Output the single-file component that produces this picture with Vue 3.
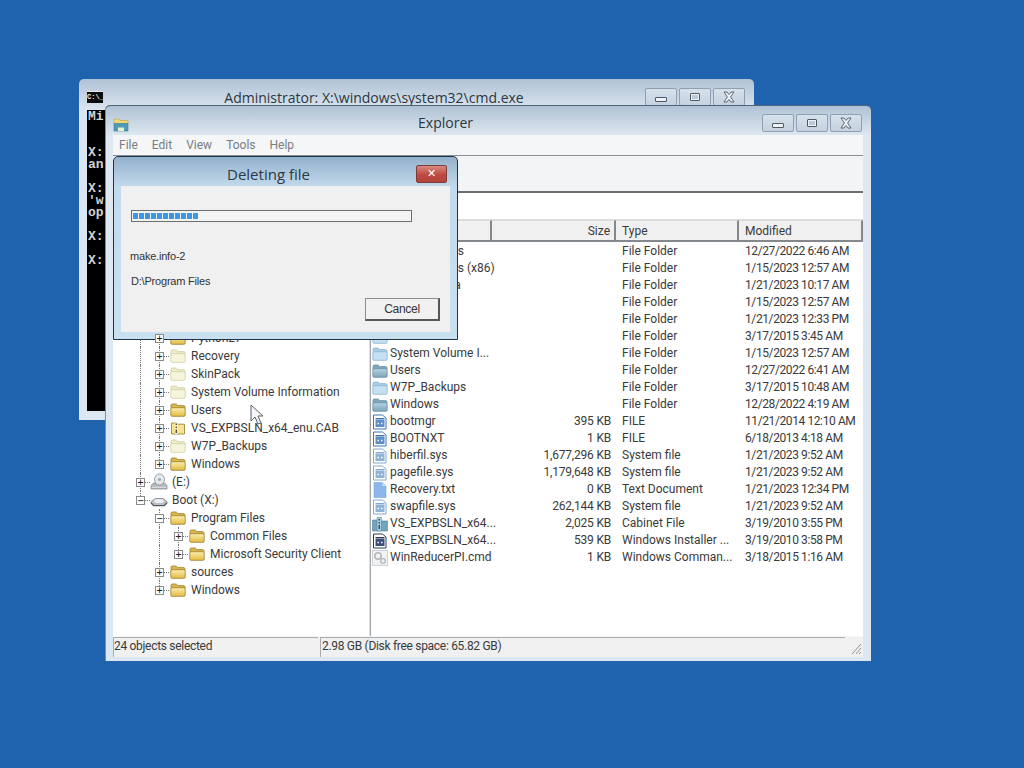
<script setup>
const consoleLines = ["Mi", "", "", "X:", "an", "", "X:", "'w", "op", "", "X:", "", "X:"]
const menus = ["File", "Edit", "View", "Tools", "Help"]

// guides: one entry per indent column. "|" line, "+" tee, "L" end, "" empty
const tree = [
  { name: "Python27", guides: ["|", "+"], box: "+", icon: "folder", tone: "yellow" },
  { name: "Recovery", guides: ["|", "+"], box: "+", icon: "folder", tone: "pale" },
  { name: "SkinPack", guides: ["|", "+"], box: "+", icon: "folder", tone: "pale" },
  { name: "System Volume Information", guides: ["|", "+"], box: "+", icon: "folder", tone: "pale" },
  { name: "Users", guides: ["|", "+"], box: "+", icon: "folder", tone: "yellow" },
  { name: "VS_EXPBSLN_x64_enu.CAB", guides: ["|", "+"], box: "+", icon: "zip", tone: "yellow" },
  { name: "W7P_Backups", guides: ["|", "+"], box: "+", icon: "folder", tone: "pale" },
  { name: "Windows", guides: ["|", "L"], box: "+", icon: "folder", tone: "yellow" },
  { name: "(E:)", guides: ["+"], box: "+", icon: "cd", tone: "wide" },
  { name: "Boot (X:)", guides: ["L"], box: "-", icon: "drive", tone: "wide" },
  { name: "Program Files", guides: ["", "+"], box: "-", icon: "folder", tone: "yellow" },
  { name: "Common Files", guides: ["", "|", "+"], box: "+", icon: "folder", tone: "yellow" },
  { name: "Microsoft Security Client", guides: ["", "|", "L"], box: "+", icon: "folder", tone: "yellow" },
  { name: "sources", guides: ["", "+"], box: "+", icon: "folder", tone: "yellow" },
  { name: "Windows", guides: ["", "L"], box: "+", icon: "folder", tone: "yellow" },
]

const columns = [
  { label: "", cls: "" },
  { label: "Size", cls: "right" },
  { label: "Type", cls: "" },
  { label: "Modified", cls: "" },
]

const files = [
  { name: "Program Files", size: "", type: "File Folder", date: "12/27/2022 6:46 AM", icon: "folder", tone: "steel" },
  { name: "Program Files (x86)", size: "", type: "File Folder", date: "1/15/2023 12:57 AM", icon: "folder", tone: "steel" },
  { name: "ProgramData", size: "", type: "File Folder", date: "1/21/2023 10:17 AM", icon: "folder", tone: "sky" },
  { name: "Python27", size: "", type: "File Folder", date: "1/15/2023 12:57 AM", icon: "folder", tone: "steel" },
  { name: "Recovery", size: "", type: "File Folder", date: "1/21/2023 12:33 PM", icon: "folder", tone: "sky" },
  { name: "SkinPack", size: "", type: "File Folder", date: "3/17/2015 3:45 AM", icon: "folder", tone: "sky" },
  { name: "System Volume I...", size: "", type: "File Folder", date: "1/15/2023 12:57 AM", icon: "folder", tone: "sky" },
  { name: "Users", size: "", type: "File Folder", date: "12/27/2022 6:41 AM", icon: "folder", tone: "steel" },
  { name: "W7P_Backups", size: "", type: "File Folder", date: "3/17/2015 10:48 AM", icon: "folder", tone: "sky" },
  { name: "Windows", size: "", type: "File Folder", date: "12/28/2022 4:19 AM", icon: "folder", tone: "steel" },
  { name: "bootmgr", size: "395 KB", type: "FILE", date: "11/21/2014 12:10 AM", icon: "sysfile", tone: "" },
  { name: "BOOTNXT", size: "1 KB", type: "FILE", date: "6/18/2013 4:18 AM", icon: "sysfile", tone: "" },
  { name: "hiberfil.sys", size: "1,677,296 KB", type: "System file", date: "1/21/2023 9:52 AM", icon: "sysfile", tone: "faded" },
  { name: "pagefile.sys", size: "1,179,648 KB", type: "System file", date: "1/21/2023 9:52 AM", icon: "sysfile", tone: "faded" },
  { name: "Recovery.txt", size: "0 KB", type: "Text Document", date: "1/21/2023 12:34 PM", icon: "doc", tone: "" },
  { name: "swapfile.sys", size: "262,144 KB", type: "System file", date: "1/21/2023 9:52 AM", icon: "sysfile", tone: "faded" },
  { name: "VS_EXPBSLN_x64...", size: "2,025 KB", type: "Cabinet File", date: "3/19/2010 3:55 PM", icon: "cab", tone: "" },
  { name: "VS_EXPBSLN_x64...", size: "539 KB", type: "Windows Installer ...", date: "3/19/2010 3:58 PM", icon: "sysfile", tone: "dark" },
  { name: "WinReducerPI.cmd", size: "1 KB", type: "Windows Comman...", date: "3/18/2015 1:16 AM", icon: "gear", tone: "" },
]

const progressBlocks = 11
</script>

<template>
  <div class="desktop">
    <svg class="defs" width="0" height="0">
      <defs>
        <linearGradient id="gy" x1="0" y1="0" x2="0" y2="1">
          <stop offset="0" stop-color="#fbeeae" />
          <stop offset="1" stop-color="#e2bb45" />
        </linearGradient>
        <linearGradient id="gs" x1="0" y1="0" x2="0" y2="1">
          <stop offset="0" stop-color="#b6d3e0" />
          <stop offset="1" stop-color="#7ca5b9" />
        </linearGradient>
      </defs>
      <symbol id="folder" viewBox="0 0 16 16">
        <path d="M1 6V3.300C1 2.500 1.500 2 2.200 2h3.600c.5 0 .8.200 1.100.6l.7 1h5.900c.9 0 1.500.6 1.500 1.400v1.500H1z" fill="var(--back)" stroke="var(--edge)" stroke-width=".8" />
        <path d="M.8 7c0-.8.5-1.300 1.200-1.300h12c.7 0 1.200.5 1.200 1.300v6c0 .8-.5 1.300-1.200 1.300H2c-.7 0-1.200-.5-1.200-1.300z" fill="var(--front)" stroke="var(--edge)" stroke-width=".8" />
      </symbol>
      <symbol id="zip" viewBox="0 0 16 16">
        <path d="M1.500 3h5l1 1.200h7v9.800h-13z" fill="#f6e394" stroke="#8f7a30" stroke-width=".8" />
        <path d="M5 3h2.500v11H5z" fill="#fff6c8" />
        <path d="M5.600 3.500h1.300v1.400H5.600zM5.600 6.500h1.300v1.400H5.600zM5.600 9.500h1.300v3.500H5.600z" fill="#3c3c30" />
      </symbol>
      <symbol id="cd" viewBox="0 0 18 18">
        <path d="M1 12.500 3.500 10h11l2.500 2.500V16H1z" fill="#b4b9bf" stroke="#70777e" stroke-width=".6" />
        <path d="M1.800 14.300h14.400" stroke="#eef0f2" stroke-width=".8" />
        <ellipse cx="9.500" cy="6.500" rx="5" ry="5.500" fill="#e4e9ec" stroke="#878f95" stroke-width=".8" />
        <circle cx="9.500" cy="6.500" r="1.600" fill="#a0a9b0" />
      </symbol>
      <symbol id="drive" viewBox="0 0 18 18">
        <path d="M.6 11 5.500 7.500h7.500l4.400 3.500-3.400 3.500H3.800z" fill="#bcc1c5" stroke="#6f767d" stroke-width=".7" />
        <ellipse cx="9" cy="10" rx="5" ry="2" fill="#eceeef" />
        <path d="M1 12 3.800 14.600h10.400L17 12" fill="none" stroke="#50575e" stroke-width="1.200" />
      </symbol>
      <symbol id="sysfile" viewBox="0 0 16 16">
        <path d="M1.500 1h9l3.500 3v11H1.500z" fill="#fff" stroke="var(--line, #3e74b2)" />
        <rect x="3.500" y="6" width="9" height="7" fill="var(--panel, #5d8fc6)" />
        <rect x="3.500" y="4" width="9" height="1.500" fill="var(--line, #3e74b2)" />
        <path d="M5.500 9.500h1.500M9 9.500h1.500" stroke="#fff" stroke-width="1.400" />
      </symbol>
      <symbol id="doc" viewBox="0 0 16 16">
        <path d="M2 .5h8.500L14 4v11.500H2z" fill="#8cb7ea" stroke="#7aa6db" stroke-width=".6" />
        <path d="M10.500.5V4H14" fill="#cfe2f7" />
      </symbol>
      <symbol id="cab" viewBox="0 0 16 16">
        <path d="M.5 4h5l1.500 1h8.500v10H.5z" fill="#73a3bd" stroke="#4e7f9a" stroke-width=".6" />
        <path d="M5 1.500h4.500V15H5z" fill="#a8cfe0" stroke="#4e7f9a" stroke-width=".5" />
        <path d="M6.500 3H8v1.500H6.500zM6.500 6H8v1.500H6.500zM6.500 9H8v4H6.500z" fill="#2e5068" />
      </symbol>
      <symbol id="gear" viewBox="0 0 16 16">
        <rect x=".5" y=".5" width="15" height="15" fill="#f2f2f2" stroke="#cfd3d6" />
        <circle cx="6" cy="6" r="3.200" fill="none" stroke="#b3b8bc" stroke-width="1.600" />
        <circle cx="11" cy="11" r="2.300" fill="none" stroke="#b3b8bc" stroke-width="1.300" />
      </symbol>
      <symbol id="capx" viewBox="0 0 14 12">
        <path d="M2 1h3l2 2.500L9 1h3L8.600 6 12 11H9L7 8.500 5 11H2l3.400-5z" fill="#edf2f6" stroke="#4c5a66" stroke-width=".9" />
      </symbol>
    </svg>

    <!-- Console behind -->
    <section class="window cmd">
      <header class="titlebar">
        <span class="cmd-icon">C:\_</span>
        <span class="title">Administrator: X:\windows\system32\cmd.exe</span>
        <div class="caption-buttons">
          <button class="cap"><i class="g-min"></i></button>
          <button class="cap"><i class="g-max"></i></button>
          <button class="cap"><svg width="14" height="12"><use href="#capx" /></svg></button>
        </div>
      </header>
      <div class="console">
        <div v-for="(line, i) in consoleLines" :key="i" class="console-line">{{ line }}</div>
      </div>
    </section>

    <!-- Explorer -->
    <section class="window explorer">
      <header class="titlebar">
        <svg class="app-icon" viewBox="0 0 16 16" width="16" height="16">
          <path d="M1 3h5l1 1.500h8V8H1z" fill="#f0d877" stroke="#b9a24b" stroke-width=".6" />
          <path d="M1 7.500h14V15H1z" fill="#4f9ab5" stroke="#3b7d99" stroke-width=".6" />
          <path d="M5 15v-3.500h6V15" fill="#e6f0d0" />
        </svg>
        <span class="title">Explorer</span>
        <div class="caption-buttons">
          <button class="cap"><i class="g-min"></i></button>
          <button class="cap"><i class="g-max"></i></button>
          <button class="cap"><svg width="14" height="12"><use href="#capx" /></svg></button>
        </div>
      </header>

      <div class="client">
        <nav class="menubar">
          <span v-for="m in menus" :key="m">{{ m }}</span>
        </nav>
        <div class="toolbar"></div>
        <div class="addressbar"></div>

        <div class="panes">
          <div class="tree">
            <div v-for="(node, i) in tree" :key="i" class="tree-row">
              <span v-for="(g, j) in node.guides" :key="j" class="guide" :class="{ line: g === '|', tee: g === '+', end: g === 'L' }">
                <b v-if="j === node.guides.length - 1" class="box">{{ node.box === "+" ? "+" : "−" }}</b>
              </span>
              <svg class="icon" :class="node.tone" width="16" height="16"><use :href="'#' + node.icon" /></svg>
              <span class="tree-label">{{ node.name }}</span>
            </div>
          </div>

          <div class="list">
            <div class="list-header">
              <div v-for="(c, i) in columns" :key="i" class="col-head" :class="c.cls">{{ c.label }}</div>
            </div>
            <div v-for="(f, i) in files" :key="i" class="list-row">
              <div class="cell-name">
                <svg class="icon" :class="f.tone" width="16" height="16"><use :href="'#' + f.icon" /></svg>
                <span>{{ f.name }}</span>
              </div>
              <div class="cell-size">{{ f.size }}</div>
              <div class="cell-type">{{ f.type }}</div>
              <div class="cell-date">{{ f.date }}</div>
            </div>
          </div>
        </div>

        <footer class="statusbar">
          <div class="status-cell first">24 objects selected</div>
          <div class="status-cell second">2.98 GB (Disk free space: 65.82 GB)</div>
          <svg class="grip" width="12" height="14" viewBox="0 0 12 14">
            <path d="M11 3 2 13M11 7 6 13M11 11l-2 2" stroke="#8e9499" fill="none" />
          </svg>
        </footer>
      </div>
    </section>

    <!-- Progress dialog -->
    <section class="dialog">
      <header class="dialog-title">
        <span class="title">Deleting file</span>
        <button class="close-red">✕</button>
      </header>
      <div class="dialog-body">
        <div class="progress">
          <i v-for="n in progressBlocks" :key="n"></i>
        </div>
        <p class="file-name">make.info-2</p>
        <p class="file-path">D:\Program Files</p>
        <div class="dialog-actions">
          <button class="cancel">Cancel</button>
        </div>
      </div>
    </section>

    <!-- Mouse pointer -->
    <svg class="pointer" width="14" height="22" viewBox="0 0 14 22">
      <path d="M1 1v16l4-4 3 7 3-1-3-7h5z" fill="#f4f6f8" stroke="#5a6068" stroke-width="1" />
    </svg>
  </div>
</template>

<style>
html,
body {
  margin: 0;
  background: #1f63ae;
}
</style>

<style scoped>
.desktop {
  position: relative;
  width: 1024px;
  height: 768px;
  overflow: hidden;
  background: #1f63ae;
  font-family: Roboto, "Noto Sans", sans-serif;
  font-size: 12px;
  color: #3a3a3a;
}
.defs {
  position: absolute;
}

.window {
  position: absolute;
  box-sizing: border-box;
  display: flex;
  flex-direction: column;
  border-radius: 5px 5px 0 0;
}
.cmd {
  left: 79px;
  top: 79px;
  width: 675px;
  height: 341px;
  padding: 0 8px 9px;
  background: linear-gradient(#afc2d5, #dbe5ef 31px, #dce7f1);
}
.explorer {
  left: 105px;
  top: 105px;
  width: 766px;
  height: 556px;
  padding: 0 8px 4px;
  border-top: 1px solid #4f6478;
  background: linear-gradient(#afc2d5, #dfe8f1 30px, #dce7f1);
  box-shadow: inset 1px 0 0 #7b8c9c;
}

.titlebar {
  display: flex;
  align-items: flex-start;
  box-sizing: border-box;
  flex: none;
}
.explorer .titlebar {
  height: 29px;
  padding-top: 7px;
}
.cmd .titlebar {
  height: 31px;
  padding-top: 9px;
}
.title {
  flex: 1;
  text-align: center;
  font-family: "Open Sans", "Noto Sans", sans-serif;
  font-size: 14px;
  line-height: 20px;
  color: #2c3640;
}
.cmd-icon {
  width: 16px;
  height: 11px;
  margin-top: 3px;
  background: #0c0c0c;
  border-top: 1px solid #e8e8e8;
  color: #f0f0f0;
  font-family: "Liberation Mono", monospace;
  font-size: 7px;
  line-height: 10px;
  text-align: center;
  font-weight: 700;
  overflow: hidden;
  flex: none;
}
.app-icon {
  flex: none;
  margin-top: 3px;
}
.caption-buttons {
  display: flex;
  gap: 2px;
  margin-right: 1px;
  flex: none;
}
.explorer .caption-buttons {
  margin-top: 1px;
}
.cap {
  width: 32px;
  height: 18px;
  padding: 0;
  display: flex;
  align-items: center;
  justify-content: center;
  border: 1px solid #8d9fb0;
  border-radius: 2px;
  background: linear-gradient(#d6e1eb, #c4d2df);
}
.g-min {
  width: 10px;
  height: 3px;
  border: 1px solid #4c5a66;
  background: #eef2f6;
  border-radius: 1px;
  margin-top: 5px;
}
.g-max {
  width: 8px;
  height: 6px;
  border: 1px solid #4c5a66;
  background: #eef2f6;
  box-shadow: inset 0 0 0 1px #eef2f6, inset 0 0 0 3px #bccbda;
  border-radius: 1px;
}

.console {
  flex: 1;
  padding: 1px 0 0 1px;
  background: #000;
  color: #d4d4d4;
  font-family: "Liberation Mono", monospace;
  font-weight: 700;
  font-size: 13px;
  line-height: 12px;
}
.console-line {
  height: 12px;
}

.client {
  flex: 1;
  min-height: 0;
  display: flex;
  flex-direction: column;
  background: #f5f6f7;
}
.menubar {
  display: flex;
  height: 20px;
  flex: none;
  align-items: center;
  padding-left: 6px;
  padding-bottom: 1px;
  box-sizing: border-box;
  gap: 14px;
  color: #777d82;
  background: #f4f6f8;
}
.toolbar {
  height: 36px;
  flex: none;
  border-top: 1px solid #8a8f94;
  box-sizing: border-box;
  background: #f3f4f6;
}
.addressbar {
  height: 29px;
  flex: none;
  box-sizing: border-box;
  border-top: 2px solid #6a6f74;
  background: #fff;
  border-bottom: 1px solid #dcdcdc;
}

.panes {
  flex: 1;
  min-height: 0;
  display: flex;
  background: #fff;
}
.tree {
  width: 257px;
  flex: none;
  box-sizing: border-box;
  padding-top: 109px;
  border-right: 1px solid #dcdfe2;
  overflow: hidden;
}
.tree-row {
  display: flex;
  align-items: center;
  height: 18px;
  padding-left: 18px;
  white-space: nowrap;
}
.guide {
  position: relative;
  width: 19px;
  height: 18px;
  flex: none;
  display: flex;
  align-items: center;
  justify-content: center;
}
.guide.line::before,
.guide.tee::before,
.guide.end::before {
  content: "";
  position: absolute;
  left: 9px;
  top: 0;
  bottom: 0;
  border-left: 1px dotted #777;
}
.guide.end::before {
  bottom: 9px;
}
.guide.tee::after,
.guide.end::after {
  content: "";
  position: absolute;
  left: 10px;
  right: 0;
  top: 9px;
  border-top: 1px dotted #777;
}
.box {
  position: relative;
  z-index: 1;
  width: 9px;
  height: 9px;
  box-sizing: border-box;
  border: 1px solid #8a8a8a;
  background: #fff;
  color: #222;
  font: 400 10px/7px "DejaVu Sans Mono", monospace;
  text-align: center;
  overflow: hidden;
}
.icon {
  flex: none;
  margin-left: 1px;
  --edge: #9a7f2e;
  --back: #dcb64c;
  --front: url(#gy);
}
.icon.wide {
  width: 18px;
  height: 18px;
  margin-left: 0;
  margin-right: -1px;
}
.icon.yellow {
  --edge: #9a7f2e;
  --back: #dcb64c;
  --front: url(#gy);
}
.icon.pale {
  --edge: #cfcfa6;
  --back: #ecebc8;
  --front: #f6f5dc;
}
.icon.steel {
  --edge: #6a93a8;
  --back: #7fa6bb;
  --front: url(#gs);
}
.icon.sky {
  --edge: #8db4d2;
  --back: #a8cde6;
  --front: #c4e0f2;
}
.icon.faded {
  --line: #82a8d0;
  --panel: #8eb2d8;
}
.icon.dark {
  --line: #2a3a52;
  --panel: #38507a;
}
.tree-label {
  margin-left: 5px;
}

.list {
  flex: 1;
  min-width: 0;
  border-left: 1px solid #a3a7ab;
}
.list-header,
.list-row {
  display: grid;
  grid-template-columns: 121px 124px 123px 124px;
}
.list-header {
  height: 20px;
  box-sizing: border-box;
  margin-bottom: 3px;
}
.col-head {
  box-sizing: border-box;
  padding: 1px 6px 0;
  line-height: 18px;
  background: #f0f0f0;
  border-top: 1px solid #dcdcdc;
  border-right: 2px solid #84888c;
  border-bottom: 2px solid #84888c;
}
.col-head.right {
  text-align: right;
  padding-right: 4px;
}
.list-row {
  height: 17px;
  line-height: 17px;
  white-space: nowrap;
}
.cell-name {
  display: flex;
  align-items: center;
  gap: 2px;
}
.cell-size {
  text-align: right;
  padding-right: 5px;
  letter-spacing: -0.2px;
}
.cell-type,
.cell-date {
  padding-left: 6px;
  overflow: hidden;
}
.cell-date {
  letter-spacing: -0.4px;
}

.statusbar {
  display: flex;
  align-items: stretch;
  height: 20px;
  flex: none;
  margin-top: 1px;
  position: relative;
  background: #f0f0f0;
  letter-spacing: -0.3px;
}
.status-cell {
  box-sizing: border-box;
  line-height: 17px;
  border-top: 1px solid #a9adb0;
  border-left: 1px solid #a9adb0;
  white-space: nowrap;
}
.status-cell.first {
  width: 205px;
}
.status-cell.second {
  width: 525px;
  margin-left: 2px;
  padding-left: 1px;
}
.grip {
  position: absolute;
  right: 1px;
  bottom: 2px;
}

.dialog {
  position: absolute;
  left: 113px;
  top: 156px;
  width: 345px;
  height: 184px;
  box-sizing: border-box;
  display: flex;
  flex-direction: column;
  padding: 0 7px 7px;
  border: 1px solid #1f3346;
  border-radius: 5px 5px 0 0;
  background: linear-gradient(#93b1cc, #c3daec 30px, #c9e0f1);
}
.dialog-title {
  display: flex;
  align-items: flex-start;
  box-sizing: border-box;
  height: 29px;
  padding-top: 8px;
  flex: none;
}
.dialog .title {
  font-size: 15px;
  color: #2b3947;
  margin-top: -1px;
}
.close-red {
  width: 31px;
  height: 18px;
  padding: 0;
  border: 1px solid #7d3b36;
  border-radius: 2px;
  background: linear-gradient(#d98a80, #bd4a40 55%, #b5433a);
  color: #fff;
  font: 700 11px/14px "DejaVu Sans", sans-serif;
  margin-right: 3px;
}
.dialog-body {
  flex: 1;
  display: flex;
  flex-direction: column;
  background: #f0f0f0;
  padding: 24px 10px 0 9px;
  font-family: "Liberation Sans", Arial, sans-serif;
  font-size: 11px;
  letter-spacing: -0.2px;
  color: #333;
}
.progress {
  display: flex;
  gap: 1px;
  width: 281px;
  height: 12px;
  margin-left: 1px;
  box-sizing: border-box;
  padding: 2px 1px;
  border: 1px solid #6b6f72;
  background: #f4f4f2;
}
.progress i {
  width: 5px;
  background: #3c95e6;
}
.file-name {
  margin: 27px 0 0;
  line-height: 14px;
}
.file-path {
  margin: 11px 0 0 1px;
  line-height: 14px;
}
.dialog-actions {
  display: flex;
  justify-content: flex-end;
  margin-top: 10px;
}
.cancel {
  width: 75px;
  height: 23px;
  padding: 0;
  border: 1px solid #8a8d90;
  border-right: 2px solid #55585b;
  border-bottom: 2px solid #55585b;
  background: #f1f1f1;
  font: 12px "Liberation Sans", Arial, sans-serif;
  letter-spacing: -0.3px;
  color: #333;
}
.pointer {
  position: absolute;
  left: 250px;
  top: 404px;
}
</style>
